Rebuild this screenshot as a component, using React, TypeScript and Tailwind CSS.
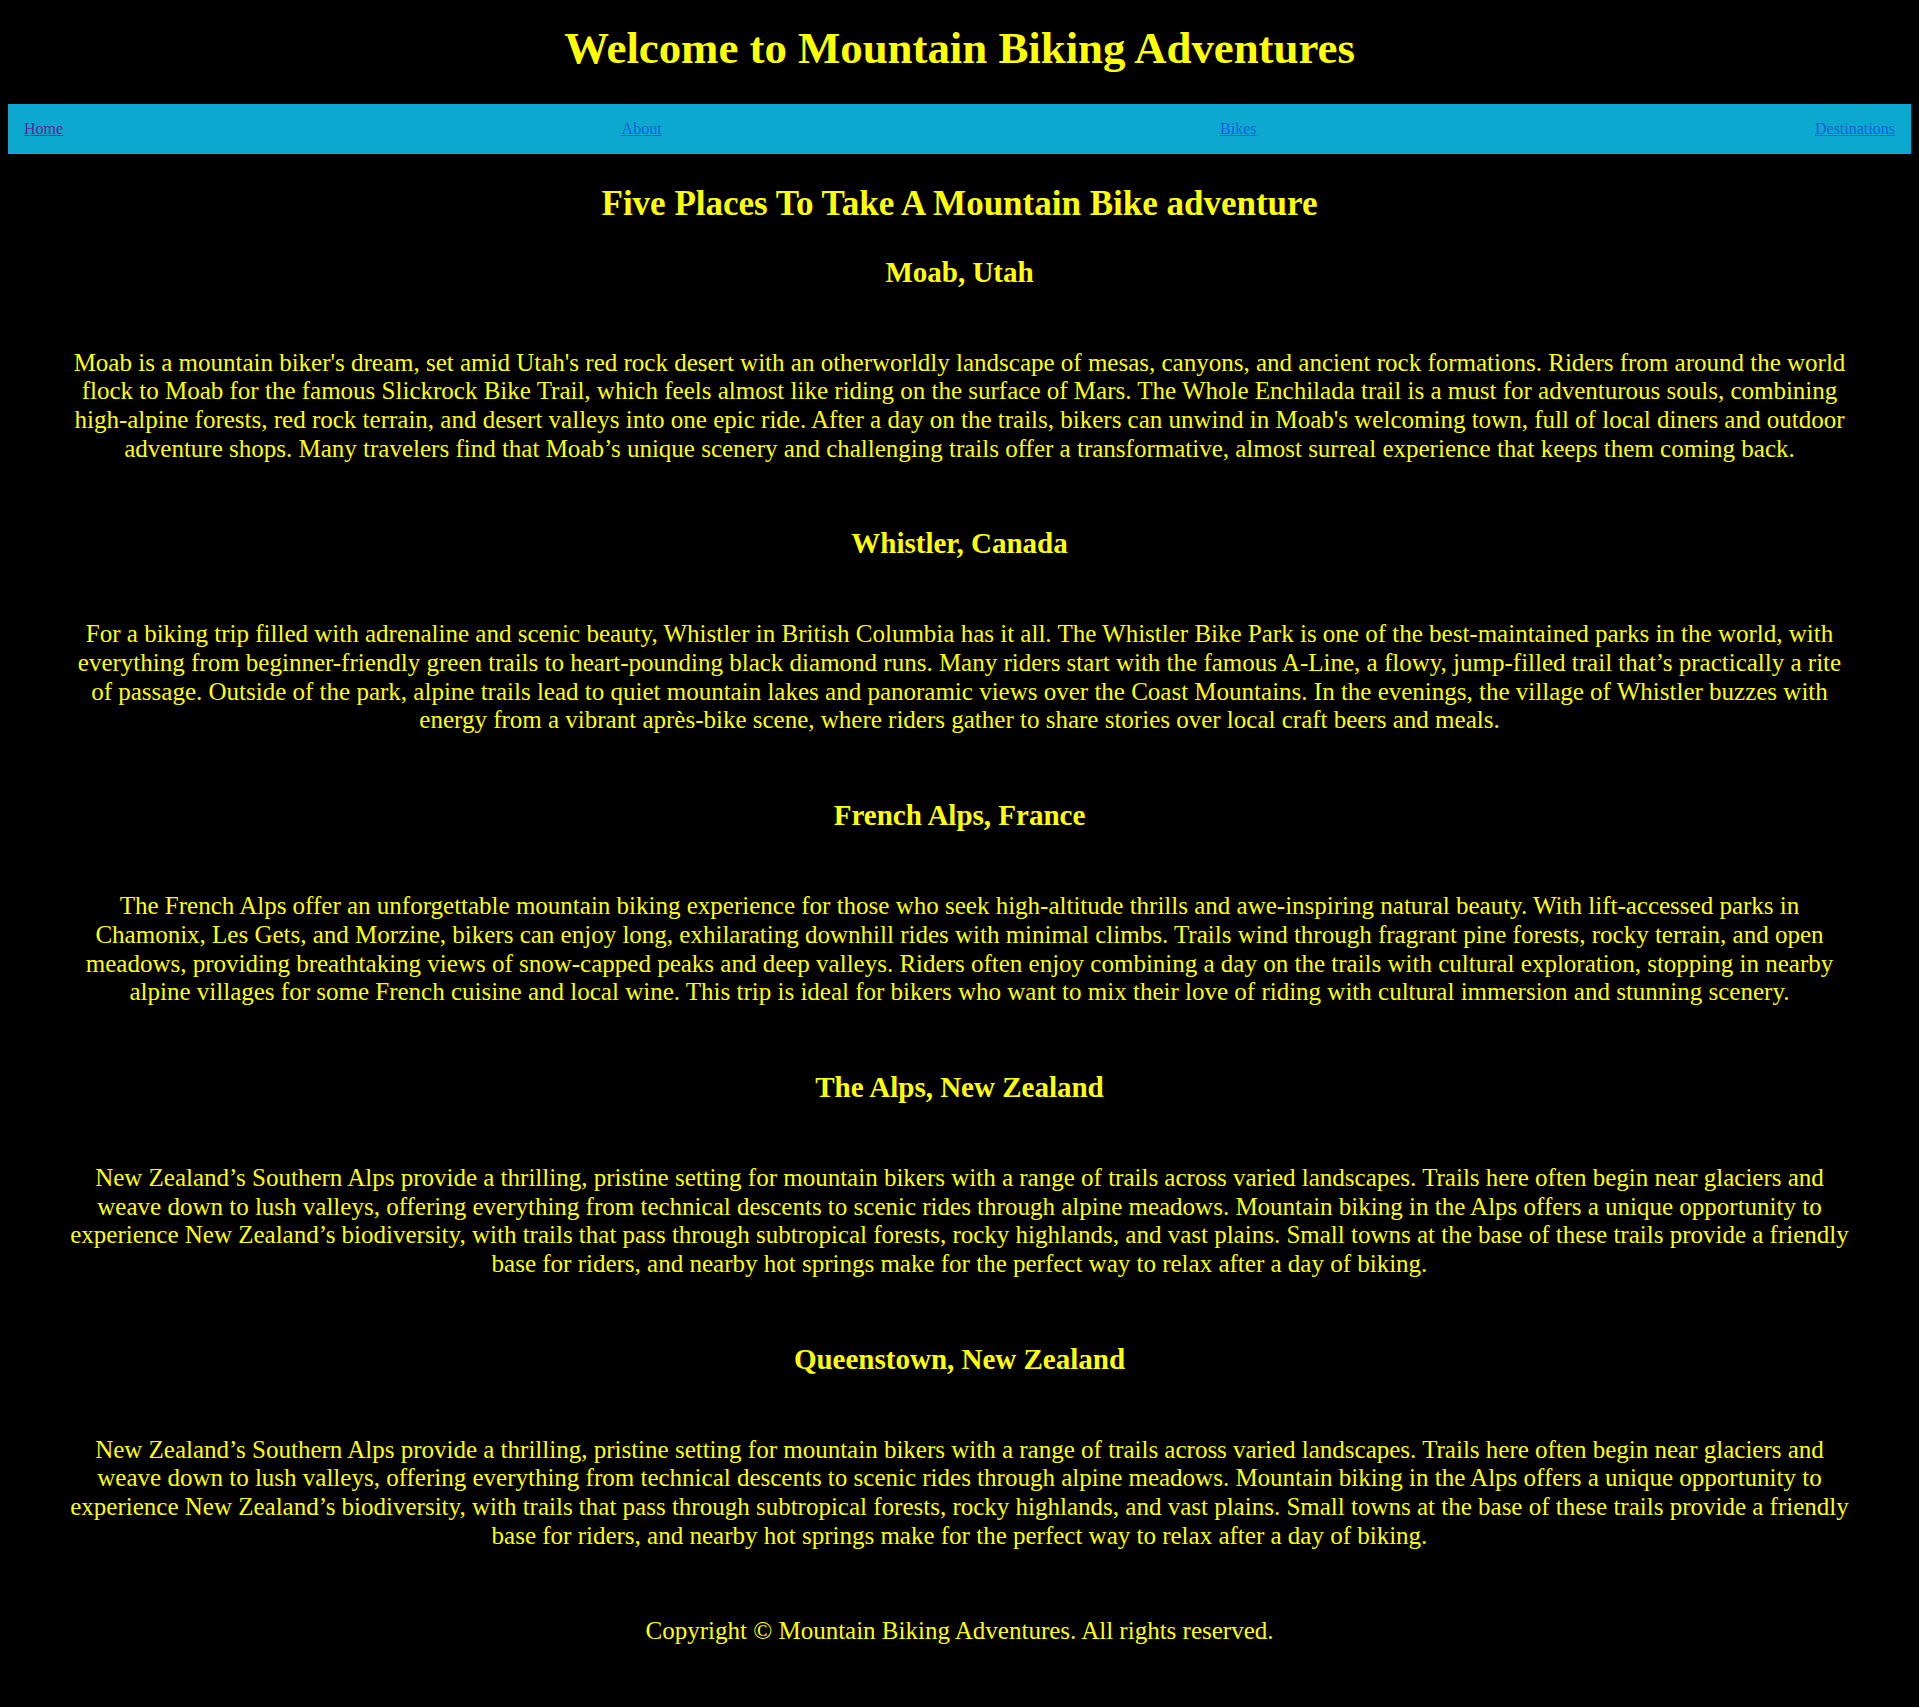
import React from 'react';

const destinations = [
  {
    name: 'Moab, Utah',
    text: "Moab is a mountain biker's dream, set amid Utah's red rock desert with an otherworldly landscape of mesas, canyons, and ancient rock formations. Riders from around the world flock to Moab for the famous Slickrock Bike Trail, which feels almost like riding on the surface of Mars. The Whole Enchilada trail is a must for adventurous souls, combining high-alpine forests, red rock terrain, and desert valleys into one epic ride. After a day on the trails, bikers can unwind in Moab's welcoming town, full of local diners and outdoor adventure shops. Many travelers find that Moab\u2019s unique scenery and challenging trails offer a transformative, almost surreal experience that keeps them coming back.",
  },
  {
    name: 'Whistler, Canada',
    text: 'For a biking trip filled with adrenaline and scenic beauty, Whistler in British Columbia has it all. The Whistler Bike Park is one of the best-maintained parks in the world, with everything from beginner-friendly green trails to heart-pounding black diamond runs. Many riders start with the famous A-Line, a flowy, jump-filled trail that\u2019s practically a rite of passage. Outside of the park, alpine trails lead to quiet mountain lakes and panoramic views over the Coast Mountains. In the evenings, the village of Whistler buzzes with energy from a vibrant apr\u00e8s-bike scene, where riders gather to share stories over local craft beers and meals.',
  },
  {
    name: 'French Alps, France',
    text: 'The French Alps offer an unforgettable mountain biking experience for those who seek high-altitude thrills and awe-inspiring natural beauty. With lift-accessed parks in Chamonix, Les Gets, and Morzine, bikers can enjoy long, exhilarating downhill rides with minimal climbs. Trails wind through fragrant pine forests, rocky terrain, and open meadows, providing breathtaking views of snow-capped peaks and deep valleys. Riders often enjoy combining a day on the trails with cultural exploration, stopping in nearby alpine villages for some French cuisine and local wine. This trip is ideal for bikers who want to mix their love of riding with cultural immersion and stunning scenery.',
  },
  {
    name: 'The Alps, New Zealand',
    text: 'New Zealand\u2019s Southern Alps provide a thrilling, pristine setting for mountain bikers with a range of trails across varied landscapes. Trails here often begin near glaciers and weave down to lush valleys, offering everything from technical descents to scenic rides through alpine meadows. Mountain biking in the Alps offers a unique opportunity to experience New Zealand\u2019s biodiversity, with trails that pass through subtropical forests, rocky highlands, and vast plains. Small towns at the base of these trails provide a friendly base for riders, and nearby hot springs make for the perfect way to relax after a day of biking.',
  },
  {
    name: 'Queenstown, New Zealand',
    text: 'New Zealand\u2019s Southern Alps provide a thrilling, pristine setting for mountain bikers with a range of trails across varied landscapes. Trails here often begin near glaciers and weave down to lush valleys, offering everything from technical descents to scenic rides through alpine meadows. Mountain biking in the Alps offers a unique opportunity to experience New Zealand\u2019s biodiversity, with trails that pass through subtropical forests, rocky highlands, and vast plains. Small towns at the base of these trails provide a friendly base for riders, and nearby hot springs make for the perfect way to relax after a day of biking.',
  },
];

const links = ['Home', 'About', 'Bikes', 'Destinations'];

export default function App() {
  return (
    <div className="min-h-screen bg-black px-2 pb-[60px] font-['Liberation_Serif','Times_New_Roman',serif] text-[#ffff00]">
      <h1 className="pt-[23px] pb-[29px] text-center text-[44.8px] font-bold leading-[51.5px]">
        Welcome to Mountain Biking Adventures
      </h1>

      <nav className="flex justify-between bg-[#0ca8d0] p-4 text-base leading-[18px]">
        {links.map((link, i) => (
          <a
            key={link}
            href="#"
            className={i === 0 ? 'text-[#6a1b9a] underline' : 'text-[#1a62d6] underline'}
          >
            {link}
          </a>
        ))}
      </nav>

      <main className="flex flex-col px-[60px]">
        <h2 className="mt-[30px] text-center text-[35px] font-bold leading-[40px]">
          Five Places To Take A Mountain Bike adventure
        </h2>

        {destinations.map((d, i) => (
          <section key={d.name} className={i === 0 ? 'mt-[32px]' : 'mt-[64px]'}>
            <h3 className="text-center text-[29px] font-bold leading-[33px]">{d.name}</h3>
            <p className="mt-[60px] text-center text-[25px] leading-[28.7px]">{d.text}</p>
          </section>
        ))}

        <footer className="mt-[66px] text-center text-[25px] leading-[28.7px]">
          Copyright &copy; Mountain Biking Adventures. All rights reserved.
        </footer>
      </main>
    </div>
  );
}
